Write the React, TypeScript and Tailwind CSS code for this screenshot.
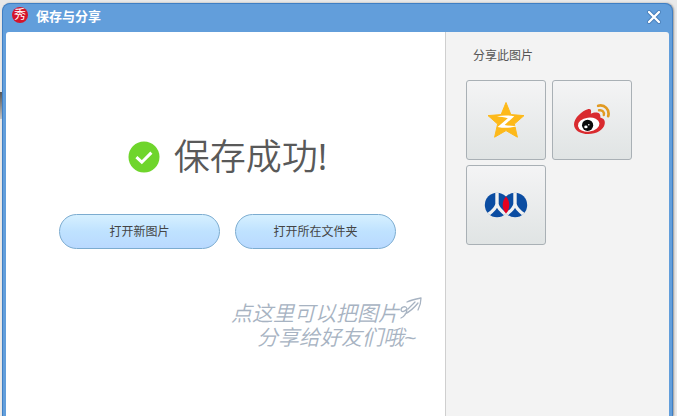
import type { ReactNode } from "react";

const FONT = "font-['Liberation_Sans','Noto_Sans_CJK_SC',sans-serif]";

function QzoneIcon() {
    return (
        <svg viewBox="0 0 38 36" className="w-[38px] h-9" aria-hidden="true">
            <path
                d="M19 0.5 L23.9 12.6 L37 13.6 L27.4 22 L30.4 35.2 L19 28.6 L7.6 35.2 L10.6 22 L1 13.6 L14.1 12.6 Z"
                fill="#fdb91a"
                stroke="#fdb91a"
                strokeLinejoin="round"
            />
            <path
                d="M10 14.2 C15.5 13.2 21 13.1 27.3 14.2 L17.6 23 C22 23.9 26.6 24.1 31 23.8 C24.6 26.2 17 26.2 10.6 24.9 L20.8 16.2 C17 15.2 13.6 14.7 10 14.2 Z"
                fill="#fff"
            />
        </svg>
    );
}

function WeiboIcon() {
    return (
        <svg viewBox="0 0 38 32" className="w-[38px] h-8" aria-hidden="true">
            <path
                d="M14.8 5.2 C18 4.4 18.6 6.4 17.8 9.8 C21.6 8 28.2 7.6 27.3 13.4 C30.8 14.4 32.4 16.4 31.7 20 C30.6 26 23.4 30 15.5 30 C7 30 1 26.2 1 20.2 C1 14 9.4 6.5 14.8 5.2 Z"
                fill="#d92b2f"
            />
            <ellipse cx="15.7" cy="20.6" rx="10.8" ry="7" transform="rotate(-7 15.7 20.6)" fill="#fff" />
            <circle cx="14.6" cy="21.3" r="5.6" fill="#0c0c0c" />
            <ellipse cx="12.9" cy="22.9" rx="1.7" ry="1.4" fill="#fff" />
            <circle cx="15.8" cy="20.7" r="0.8" fill="#fff" />
            <path d="M25.2 1.8 C31.6 0.2 37 5.6 35.2 12.2" fill="none" stroke="#e19a22" strokeWidth="2.7" strokeLinecap="round" />
            <path d="M26 6.3 C29.4 5.6 31.6 8.2 30.8 11" fill="none" stroke="#e19a22" strokeWidth="2.4" strokeLinecap="round" />
        </svg>
    );
}

function RenrenIcon() {
    return (
        <svg viewBox="0 0 44 26" className="w-11 h-[26px]" aria-hidden="true">
            <defs>
                <clipPath id="left-disc">
                    <circle cx="13" cy="13" r="12.4" />
                </clipPath>
                <clipPath id="right-disc">
                    <circle cx="31" cy="13" r="12.4" />
                </clipPath>
            </defs>
            <circle cx="13" cy="13" r="12.2" fill="#0b4da2" />
            <circle cx="31" cy="13" r="12.2" fill="#0b4da2" />
            <g fill="none" stroke="#f0f1f1" strokeWidth="3.4">
                <path d="M13 -1 V13 M13 12 C12 16.5 8.5 19.5 3.5 23 M13 12 C14 16.5 17.5 19.5 22.5 23" clipPath="url(#left-disc)" />
                <path d="M31 -1 V13 M31 12 C30 16.5 26.5 19.5 21.5 23 M31 12 C32 16.5 35.5 19.5 40.5 23" clipPath="url(#right-disc)" />
            </g>
            <path d="M22 4.4 C26.4 9.4 26.4 16.6 22 21.6 C17.6 16.6 17.6 9.4 22 4.4 Z" fill="#e60020" />
        </svg>
    );
}

const TARGETS: { label: string; icon: ReactNode }[] = [
    { label: "QQ空间",   icon: <QzoneIcon /> },
    { label: "新浪微博", icon: <WeiboIcon /> },
    { label: "人人网",   icon: <RenrenIcon /> },
];

const ACTIONS = ["打开新图片", "打开所在文件夹"];

function TitleBar() {
    return (
        <header className="flex h-7 items-start justify-between pt-[3px] pl-1.5 pr-[7px]">
            <div className="flex items-start gap-2">
                <span className="flex size-4 items-center justify-center rounded-full bg-[#d5142b] text-[12px] leading-none text-white">
                    秀
                </span>
                <h1 className="text-[13px] leading-5 font-bold text-white">保存与分享</h1>
            </div>
            <button type="button" aria-label="关闭" className="flex h-5 w-4 items-center justify-center">
                <svg viewBox="0 0 16 16" className="size-4" fill="none" strokeLinecap="round">
                    <path d="M3 3 L13 13 M13 3 L3 13" stroke="#447cb8" strokeWidth="4" />
                    <path d="M3 3 L13 13 M13 3 L3 13" stroke="#fff" strokeWidth="2.4" />
                </svg>
            </button>
        </header>
    );
}

function SavePanel() {
    return (
        <main className="flex flex-1 flex-col items-center bg-white pt-[101px]">
            {/* Result */}
            <div className="flex items-center gap-3.5 pl-1">
                <svg viewBox="0 0 32 32" className="size-8" aria-hidden="true">
                    <circle cx="16" cy="16" r="15.5" fill="#6fd52c" />
                    <path d="M8.4 16.2 L13.8 21.2 L23.4 11.6" fill="none" stroke="#fff" strokeWidth="3" />
                </svg>
                <p className="font-['Open_Sans','Noto_Sans_CJK_SC',sans-serif] text-[36px] leading-[48px] text-[#595959]">
                    <span className="font-[350]">保存成功</span>!
                </p>
            </div>

            {/* Actions */}
            <div className="mt-[33px] flex gap-[15px] pl-1">
                {ACTIONS.map((label) => (
                    <button
                        key={label}
                        type="button"
                        className="h-[35px] w-[161px] rounded-full border border-[#7cacd0] bg-linear-to-b from-[#d6f0ff] via-[#bfe2ff] to-[#b9d9ff] text-[12px] text-[#444]"
                    >
                        {label}
                    </button>
                ))}
            </div>

            {/* Hint */}
            <div className="mt-[47px] mr-5 self-end text-[21px] leading-6 font-[350] text-[#a7b3c2] italic">
                <div className="flex items-end">
                    <p>点这里可以把图片</p>
                    <svg viewBox="0 0 26 26" className="mb-1 size-[26px]" fill="none" stroke="#a7b3c2" strokeWidth="1.3" strokeLinecap="round" strokeLinejoin="round" aria-hidden="true">
                        <path d="M2 22 C5 21 8 17 8 13 C7 9 2 11 2 14 C3 17 6 15 8 13 M6 18 C10 16 15 12 19 7" />
                        <path d="M9 13 C11 11 13 9 16 6 M8 6 C12 4 17 3 22 2 C22 6 21 10 19 14" />
                    </svg>
                </div>
                <p className="pl-[26px]">分享给好友们哦~</p>
            </div>
        </main>
    );
}

function SharePanel() {
    return (
        <aside className="w-56 border-l border-[#cfcfcf] bg-[#f3f3f3] pt-4 pl-5">
            <h2 className="pl-[7px] text-[12px] leading-4 text-[#555]">分享此图片</h2>
            <div className="mt-4 flex flex-wrap gap-x-1.5 gap-y-[5px]">
                {TARGETS.map((t) => (
                    <button
                        key={t.label}
                        type="button"
                        aria-label={t.label}
                        className="flex size-20 items-center justify-center rounded-[3px] border border-[#a9b0b5] bg-linear-to-b from-[#f4f4f5] to-[#e0e4e4]"
                    >
                        {t.icon}
                    </button>
                ))}
            </div>
        </aside>
    );
}

export default function App() {
    return (
        <div className={`flex min-h-screen bg-[#e9e9e9] pt-[3px] pr-1 ${FONT}`}>
            {/* Edge of the window underneath */}
            <div className="w-0.5 pt-[89px]">
                <div className="h-[27px] bg-linear-to-b from-[#555] to-[#c4c4c4]" />
            </div>

            <div className="flex flex-1 flex-col rounded-t-lg border-x border-t border-[#3f7fc4] bg-[#629edb] px-[3px] shadow-[1px_0_2px_#999]">
                <TitleBar />
                <div className="flex flex-1 overflow-hidden rounded-t-[3px]">
                    <SavePanel />
                    <SharePanel />
                </div>
            </div>
        </div>
    );
}
